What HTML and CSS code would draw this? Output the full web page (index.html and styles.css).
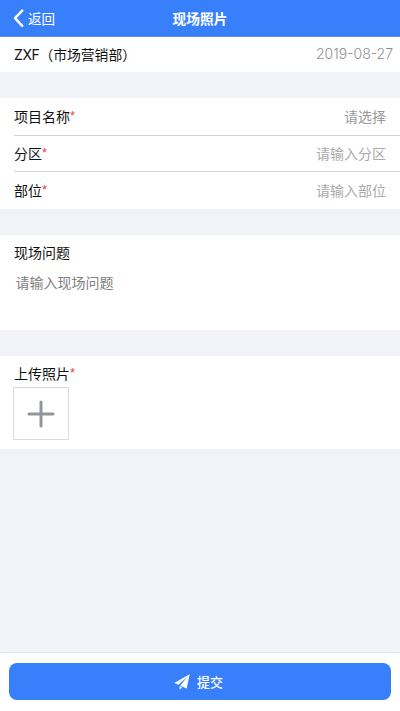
FILE: index.html
```html
<!DOCTYPE html>
<html lang="zh-CN">
<head>
<meta charset="utf-8">
<title>现场照片</title>
<link rel="stylesheet" href="styles.css">
</head>
<body>
<header class="navbar">
  <a class="back">
    <svg class="back-icon" width="11" height="18" viewBox="0 0 11 18"><path d="M9.2 1.6 2 9.2 9.2 16.8" fill="none" stroke="currentColor" stroke-width="2.4" stroke-linecap="round" stroke-linejoin="round"/></svg>
    <span>返回</span>
  </a>
  <h1 class="title">现场照片</h1>
</header>
<main class="content">
  <section class="user">
    <span class="name"><span class="latin">ZXF</span>（市场营销部）</span>
    <time class="date">2019-08-27</time>
  </section>
  <section class="fields">
    <div class="field"><span>项目名称<i class="required">*</i></span><span class="value">请选择</span></div>
    <div class="field"><span>分区<i class="required">*</i></span><span class="value hint">请输入分区</span></div>
    <div class="field"><span>部位<i class="required">*</i></span><span class="value hint">请输入部位</span></div>
  </section>
  <section class="question">
    <h2 class="label">现场问题</h2>
    <p class="question-hint">请输入现场问题</p>
  </section>
  <section class="upload">
    <h2 class="label">上传照片<i class="required">*</i></h2>
    <div class="add">
      <svg width="28" height="28" viewBox="0 0 28 28"><path d="M14 2v24M2 14h24" stroke="currentColor" stroke-width="3" stroke-linecap="round"/></svg>
    </div>
  </section>
</main>
<footer class="footer">
  <div class="submit">
    <svg width="16" height="16" viewBox="0 0 16 16"><path d="M15.6.2.2 9l4.2 1.7L13.2 3 6.2 11.8l6.5 2.6ZM5.6 12.2v3.6l2.6-2.5Z" fill="currentColor"/></svg>
    <span>提交</span>
  </div>
</footer>
</body>
</html>
```
FILE: styles.css
```css
* { box-sizing: border-box; }
body {
  margin: 0;
  height: 711px;
  display: flex;
  flex-direction: column;
  background: #f2f3f8;
  color: #111;
  font: 14px/20px "Noto Sans CJK SC", sans-serif;
}
h1, h2, p { margin: 0; font-size: inherit; font-weight: 400; }
.navbar {
  height: 37px;
  display: grid;
  grid-template-columns: 1fr auto 1fr;
  align-items: center;
  padding: 0 13px 1px;
  background: #387ffc;
  border-bottom: 1px solid #5b91e6;
  color: #fff;
}
.back { display: flex; align-items: center; gap: 4px; font-size: 13.5px; }
.title { font-weight: 700; font-size: 13.7px; }
.content { flex: 1; display: flex; flex-direction: column; gap: 26px; }
.content > section { background: #fff; }
.user {
  height: 35px;
  display: flex;
  align-items: center;
  justify-content: space-between;
  padding: 0 7px 1px 14px;
}
.name { font-size: 13.8px; }
.latin { font: 14px/20px Inter, sans-serif; letter-spacing: -0.4px; }
.date { color: #909090; font: 300 14px/20px Inter, sans-serif; }
.fields { height: 111px; padding-left: 14px; }
.field {
  height: 37px;
  display: flex;
  align-items: center;
  justify-content: space-between;
  padding: 0 14px 1px 0;
  border-bottom: 1px solid #d2d2d2;
}
.field:first-child { height: 38px; padding-bottom: 2px; }
.field:nth-child(2) { height: 36px; }
.field:last-child { padding-bottom: 2px; border-bottom: 0; }
.value { color: #999; }
.hint { color: #aaa; }
.required {
  color: #e64545;
  font: 13px/14px "Liberation Sans", sans-serif;
  vertical-align: 2px;
}
.question { height: 95px; padding: 7px 14px; }
.question-hint { margin: 10px 0 0 1.5px; color: #808080; }
.upload { height: 93px; padding: 7px 13px; }
.upload .label { height: 20px; padding-left: 1px; }
.add {
  width: 56px;
  height: 53px;
  margin-top: 4px;
  display: flex;
  align-items: center;
  justify-content: center;
  border: 1px solid #dcdcdc;
  color: #92959e;
}
.footer {
  height: 59px;
  padding: 10px 9px 11px;
  background: #fff;
  border-top: 1px solid #e6e6e9;
}
.submit {
  height: 37px;
  display: flex;
  align-items: center;
  justify-content: center;
  gap: 7px;
  padding-right: 3px;
  border-radius: 8px;
  background: #387ffc;
  color: #fff;
  font-size: 13px;
  font-weight: 500;
}
```
